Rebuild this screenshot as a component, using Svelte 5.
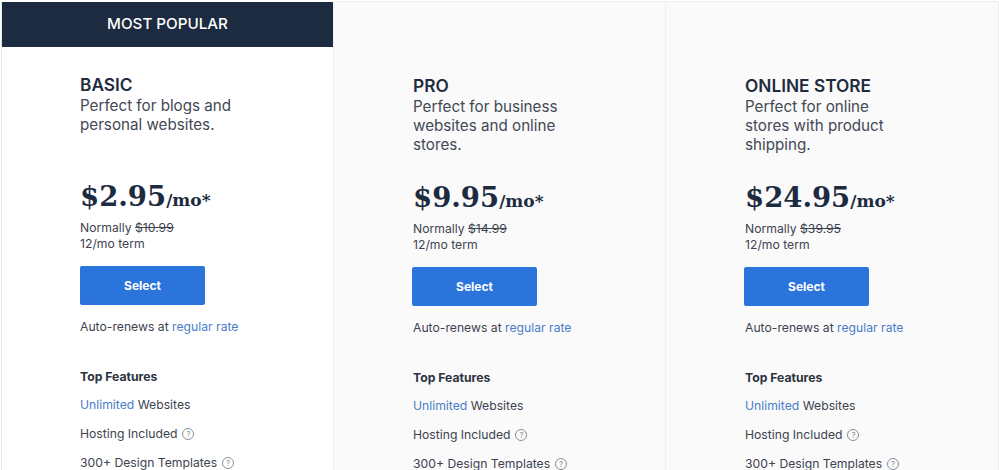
<script>
  const plans = [
    { name: 'BASIC', desc: 'Perfect for blogs and personal websites.', price: '$2.95', was: '$10.99', popular: true },
    { name: 'PRO', desc: 'Perfect for business websites and online stores.', price: '$9.95', was: '$14.99' },
    { name: 'ONLINE STORE', desc: 'Perfect for online stores with product shipping.', price: '$24.95', was: '$39.95' }
  ];
</script>

<main class="page">
  {#each plans as p}
    <section class="card" class:popular={p.popular}>
      {#if p.popular}<div class="banner">MOST POPULAR</div>{/if}
      <div class="body">
        <h2>{p.name}</h2>
        <p class="desc">{p.desc}</p>
        <div class="price">{p.price}<span>/mo*</span></div>
        <p class="term">Normally <s>{p.was}</s><br />12/mo term</p>
        <button>Select</button>
        <p class="renew">Auto-renews at <a href="#top">regular rate</a></p>
        <h3>Top Features</h3>
        <ul>
          <li><span><a href="#top">Unlimited</a> Websites</span></li>
          <li>Hosting Included <i>?</i></li>
          <li>300+ Design Templates <i>?</i></li>
        </ul>
      </div>
    </section>
  {/each}
</main>

<style>
  :global(body) { margin: 0; background: #fff; overflow: hidden; }
  .page {
    width: 999px; height: 470px; box-sizing: border-box; padding: 1px 0 0 1px;
    display: grid; grid-template-columns: 333px 332px 333px; overflow: hidden;
    font-family: Inter, sans-serif; color: #3d4350;
  }
  .card { background: #fafafa; border: 1px solid #eceef0; border-bottom: 0; border-left: 0; height: 560px; box-sizing: border-box; }
  .card.popular { background: #fff; border-left: 1px solid #e6e8ec; border-top: 0; margin-top: 1px; }
  .banner {
    height: 45px; background: #1c2b3f; color: #fff; display: flex; align-items: center; justify-content: center;
    font-size: 15.2px; font-weight: 500; padding-bottom: 3px; box-sizing: border-box;
  }
  .body { padding: 74px 0 0 79px; }
  .popular .body { padding-top: 28px; padding-left: 78px; }
  h2 { margin: 0; font-size: 17.3px; line-height: 20px; font-weight: 600; color: #1f2c40; }
  .desc { margin: 1px 0 0; width: 165px; height: 76px; font-size: 15.2px; line-height: 19px; color: #434955; }
  .price { margin-top: 6px; height: 37px; font-family: "DejaVu Serif", serif; font-weight: 700; font-size: 27.5px; line-height: 36px; color: #1c2b3f; }
  .price span { font-size: 17px; }
  .term { margin: 5px 0 0; font-size: 12.2px; line-height: 15.5px; color: #3d4350; }
  button {
    display: block; margin: 15px 0 0 -1px; width: 125px; height: 39px; border: 0; border-radius: 2px; background: #2b74dc; color: #fff;
    font: 700 12px Inter, sans-serif;
  }
  .popular button { margin-left: 0; }
  .renew { margin: 14px 0 0; font-size: 12.2px; line-height: 16px; }
  a { color: #4a7cc9; text-decoration: none; }
  h3 { margin: 34px 0 0; font-size: 12.2px; line-height: 16px; font-weight: 700; color: #2c3340; }
  ul { margin: 12px 0 0; padding: 0; list-style: none; font-size: 12.2px; line-height: 16px; }
  li { margin-bottom: 13px; display: flex; align-items: center; gap: 4px; }
  i {
    width: 10px; height: 10px; border: 1px solid #8b8f96; border-radius: 50%; color: #8b8f96; font-style: normal;
    font-size: 8px; line-height: 10px; text-align: center; margin-left: 1px;
  }
</style>
